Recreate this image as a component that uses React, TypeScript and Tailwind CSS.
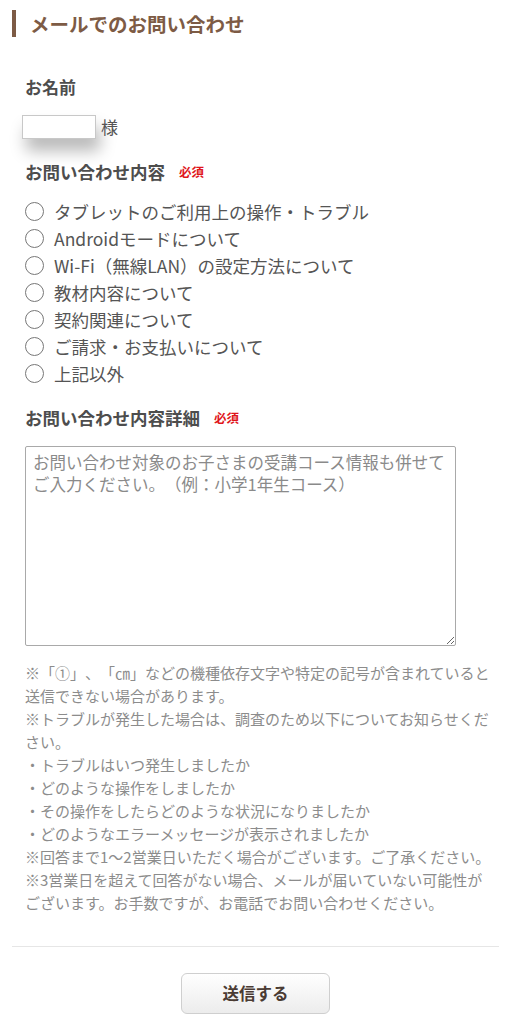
const font = { fontFamily: '"Noto Sans CJK JP", "Noto Sans", sans-serif' };

const options = [
  'タブレットのご利用上の操作・トラブル',
  'Androidモードについて',
  'Wi-Fi（無線LAN）の設定方法について',
  '教材内容について',
  '契約関連について',
  'ご請求・お支払いについて',
  '上記以外',
];

const notes = [
  '※「①」、「㎝」などの機種依存文字や特定の記号が含まれていると',
  '送信できない場合があります。',
  '※トラブルが発生した場合は、調査のため以下についてお知らせくだ',
  'さい。',
  '・トラブルはいつ発生しましたか',
  '・どのような操作をしましたか',
  '・その操作をしたらどのような状況になりましたか',
  '・どのようなエラーメッセージが表示されましたか',
  '※回答まで1〜2営業日いただく場合がございます。ご了承ください。',
  '※3営業日を超えて回答がない場合、メールが届いていない可能性が',
  'ございます。お手数ですが、お電話でお問い合わせください。',
];

const Required = () => (
  <span className="ml-[14px] text-[12.5px] font-bold text-[#e0151b]">必須</span>
);

export default function App() {
  return (
    <div className="min-h-screen w-[511px] bg-white [text-spacing-trim:space-all]" style={font}>
      <div className="pt-[10px] pl-[12px]">
        <h2 className="h-[27px] border-l-4 border-[#7d5b45] pl-[14px] text-[19.5px] font-bold leading-[27px] text-[#7d5b45]">
          メールでのお問い合わせ
        </h2>
      </div>

      <div className="px-[25px]">
        <div className="mt-[38px] text-[17px] font-bold leading-[24px] text-[#4d4d4d]">お名前</div>
        <div className="mt-[16px] -ml-[3px] flex items-center gap-[5px]">
          <input
            type="text"
            className="h-[24px] w-[74px] border border-[#c8c8c8] bg-white shadow-[4px_12px_16px_rgba(0,0,0,0.28)] outline-none"
          />
          <span className="text-[17px] leading-[24px] text-[#555]">様</span>
        </div>

        <div className="mt-[21px] flex items-center text-[17.5px] font-bold leading-[24px] text-[#4d4d4d]">
          お問い合わせ内容
          <Required />
        </div>

        <div className="mt-[14px] flex flex-col">
          {options.map((o) => (
            <label key={o} className="flex h-[27px] items-center gap-[10px]">
              <span className="h-[19px] w-[19px] shrink-0 rounded-full border-[1.5px] border-[#777] bg-white" />
              <span className="whitespace-nowrap text-[17.5px] leading-[27px] text-[#555]">{o}</span>
            </label>
          ))}
        </div>

        <div className="mt-[19px] flex items-center text-[17.5px] font-bold leading-[24px] text-[#4d4d4d]">
          お問い合わせ内容詳細
          <Required />
        </div>

        <textarea
          className="mt-[16px] block h-[200px] w-[431px] resize-y rounded-[2px] border border-[#a9a9a9] px-[7px] pt-[4px] text-[16.5px] leading-[22px] text-[#555] outline-none placeholder:text-[#8a8a8a]"
          placeholder={'お問い合わせ対象のお子さまの受講コース情報も併せて\nご入力ください。（例：小学1年生コース）'}
        />

        <div className="mt-[15px] text-[15px] leading-[23px] text-[#8c8c8c]">
          {notes.map((n, i) => (
            <div key={i} className="whitespace-nowrap">{n}</div>
          ))}
        </div>
      </div>

      <hr className="mx-[12px] mt-[32px] border-t border-[#e6e6e6]" />

      <div className="mt-[26px] flex justify-center pb-[8px]">
        <button className="h-[41px] w-[149px] rounded-[6px] border border-[#cfcfcf] bg-gradient-to-b from-white to-[#ececec] text-[16.5px] font-bold text-[#4a3b33]">
          送信する
        </button>
      </div>
    </div>
  );
}
